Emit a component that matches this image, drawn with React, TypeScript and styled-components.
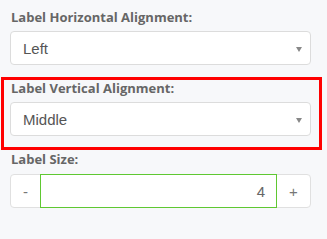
import React from 'react'
import styled, { createGlobalStyle } from 'styled-components'

const GlobalStyle = createGlobalStyle`
  html, body {
    margin: 0;
    padding: 0;
    background: #f7f8fa;
  }
  body {
    font-family: "Open Sans", "Liberation Sans", Arial, sans-serif;
  }
`

const Panel = styled.div`
  width: 327px;
  height: 239px;
  box-sizing: border-box;
  padding: 8px 16px 0 10px;
  background: #f7f8fa;
  display: flex;
  flex-direction: column;
  gap: 14px;
`

const Group = styled.div<{ $highlighted?: boolean }>`
  position: relative;
  display: flex;
  flex-direction: column;

  ${p => p.$highlighted && `
    &::after {
      content: '';
      position: absolute;
      top: -2px;
      bottom: -14px;
      left: -9px;
      right: -11px;
      border: 3px solid #f00;
      pointer-events: none;
    }
  `}
`

const Label = styled.label`
  font-family: "Open Sans", sans-serif;
  font-weight: 700;
  font-size: 13px;
  line-height: 18px;
  color: #666;
  margin: 0 0 5px 1px;
`

const SelectBox = styled.div`
  height: 34px;
  box-sizing: border-box;
  border: 1px solid #dcdcdc;
  border-radius: 4px;
  background: #fff;
  display: flex;
  align-items: center;
  justify-content: space-between;
  padding: 0 8px 0 12px;
  font-family: "Liberation Sans", Arial, sans-serif;
  font-size: 15px;
  color: #555;
`

const Caret = styled.span`
  width: 0;
  height: 0;
  border-left: 3.5px solid transparent;
  border-right: 3.5px solid transparent;
  border-top: 5px solid #888;
  margin-top: 2px;
`

const Stepper = styled.div`
  height: 34px;
  margin-top: 1px;
  box-sizing: border-box;
  border: 1px solid #e0e0e0;
  border-radius: 4px;
  background: #fff;
  display: flex;
  font-family: "Liberation Sans", Arial, sans-serif;
  font-size: 15px;
  color: #666;
`

const StepButton = styled.div<{ $w: number }>`
  width: ${p => p.$w}px;
  display: flex;
  align-items: center;
  justify-content: center;
  color: #777;
`

const NumberField = styled.div`
  flex: 1;
  margin: -1px 0;
  border: 1px solid #5fc832;
  display: flex;
  align-items: center;
  justify-content: flex-end;
  padding-right: 11px;
  color: #666;
`

function Select({ value }: { value: string }) {
  return (
    <SelectBox>
      <span>{value}</span>
      <Caret />
    </SelectBox>
  )
}

export default function App() {
  return (
    <>
      <GlobalStyle />
      <Panel>
        <Group>
          <Label>Label Horizontal Alignment:</Label>
          <Select value="Left" />
        </Group>
        <Group $highlighted>
          <Label>Label Vertical Alignment:</Label>
          <Select value="Middle" />
        </Group>
        <Group>
          <Label>Label Size:</Label>
          <Stepper>
            <StepButton $w={29}>-</StepButton>
            <NumberField>4</NumberField>
            <StepButton $w={33}>+</StepButton>
          </Stepper>
        </Group>
      </Panel>
    </>
  )
}
